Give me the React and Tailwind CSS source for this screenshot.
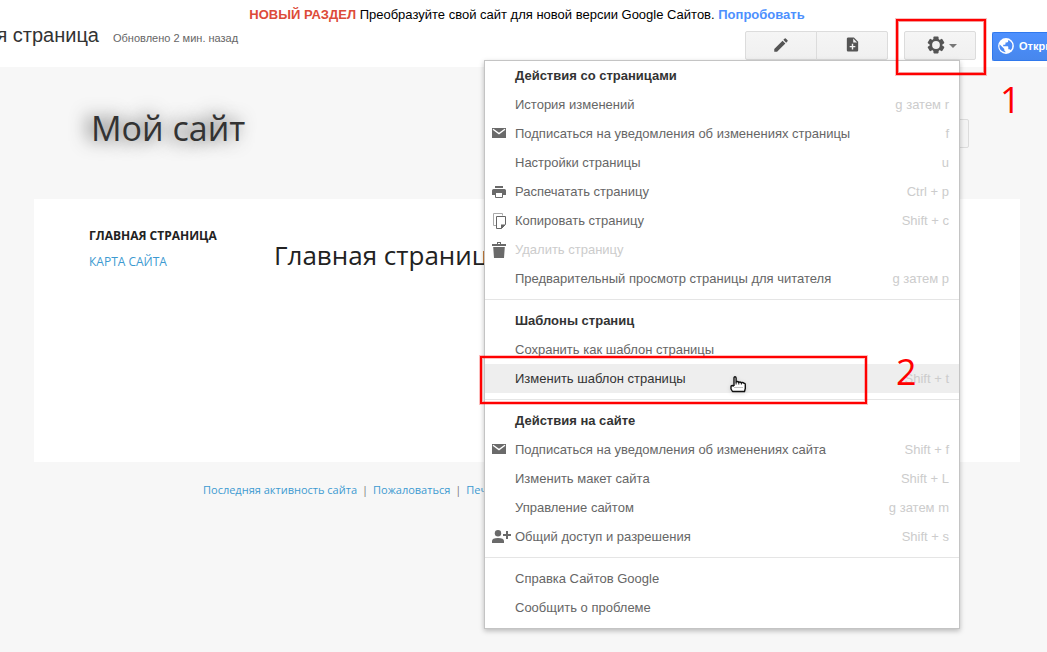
import React from "react";
import { MdEdit, MdNoteAdd } from "react-icons/md";

function GearIcon() {
  return (
    <svg viewBox="0 0 18 18" className="-mt-0.5 size-[18px]" aria-hidden="true">
      <g fill="#555">
        {[0, 60, 120].map((angle) => (
          <rect key={angle} x="6.4" y="0.6" width="5.2" height="16.8" rx="0.8" transform={`rotate(${angle} 9 9)`} />
        ))}
        <circle cx="9" cy="9" r="6.4" />
      </g>
      <circle cx="9" cy="9" r="3.9" fill="#f2f2f2" />
    </svg>
  );
}

function CaretIcon() {
  return (
    <svg viewBox="0 0 8 4" className="h-1 w-2" fill="#777" aria-hidden="true">
      <path d="M0 0H8L4 4Z" />
    </svg>
  );
}

function GlobeIcon() {
  return (
    <svg viewBox="0 0 16 16" className="-mt-0.5 size-4 shrink-0" aria-hidden="true">
      <circle cx="8" cy="8" r="7.9" fill="#fff" />
      <path
        d="M1.6 6.3L6.3 11V12Q6.3 13.1 7.4 13.4V14.4Q3.8 14 2.1 11.2Q.9 8.9 1.6 6.3ZM10 1.9Q13.8 3.2 14.4 7Q14.7 10.1 12.7 12.3Q12.3 11.2 11 11.2H10.3V9Q10.3 8.3 9.6 8.3H5.2V6.7H6.8Q7.5 6.7 7.5 6V4.5H9Q10.2 4.4 10.2 3Z"
        fill="#4b8bf6"
      />
    </svg>
  );
}

function MailIcon() {
  return (
    <svg viewBox="0 0 14 10" className="-mt-0.5 h-2.5 w-3.5" aria-hidden="true">
      <rect width="14" height="10" fill="#6a6a6a" />
      <path d="M1 1.2L7 5.6L13 1.2" fill="none" stroke="#fff" strokeWidth="1.3" />
    </svg>
  );
}

function PrintIcon() {
  return (
    <svg viewBox="0 0 14 12" className="h-3 w-3.5" aria-hidden="true">
      <path d="M3 0H11V2H3ZM1.5 3H12.5Q14 3 14 4.5V9H11V7H3V9H0V4.5Q0 3 1.5 3Z" fill="#6a6a6a" />
      <path d="M3.5 7V11.5H10.5V7" fill="#fff" stroke="#6a6a6a" />
    </svg>
  );
}

function CopyIcon() {
  return (
    <svg viewBox="0 0 14 17" className="h-[17px] w-3.5" fill="none" aria-hidden="true">
      <path d="M10.5 3.5V1.5H1.5V13.5H4" stroke="#aaa" />
      <path d="M4.5 4.5H13.5V12.5L9.5 16.5H4.5Z" fill="#fff" stroke="#666" />
      <path d="M9 12.5H13.5L9 17Z" fill="#666" />
    </svg>
  );
}

function TrashIcon() {
  return (
    <svg viewBox="0 0 14 16" className="h-4 w-3.5" fill="#6a6a6a" aria-hidden="true">
      <path d="M0 2H5V0H9V2H14V4H0ZM1.2 5H12.8L12 16H2Z" />
      <rect x="6" y="1" width="2" height="1" fill="#fff" />
    </svg>
  );
}

function ShareIcon() {
  return (
    <svg viewBox="0 0 19 13" className="-mr-[5px] h-[13px] w-[19px] shrink-0" fill="#6a6a6a" aria-hidden="true">
      <circle cx="6" cy="3.2" r="3.2" />
      <path d="M0 13V11Q0 8 6 8T12 11V13ZM11 4H14V1H16V4H19V6H16V9H14V6H11Z" />
    </svg>
  );
}

function HandPointer() {
  return (
    <svg viewBox="0 0 17 17" className="absolute left-[730px] top-[376px] size-[17px] drop-shadow-sm" aria-hidden="true">
      <path
        d="M4 10V2Q4 .8 5 .8T6.1 2V6Q7.7 5 8.7 6.3Q10.3 5.5 11.3 6.7Q13 6 13.8 7.2Q15.3 7 15.3 8.7V12.5L14.5 15.5H2.5L1 13V10.5Q1 9.5 2.2 9.5L4 10"
        fill="#fff"
        stroke="#111"
        strokeWidth="1.4"
        strokeLinejoin="round"
      />
      <path d="M6.1 6V8.5M8.8 6V8.5M11.4 6.6V8.5" stroke="#111" />
      <path d="M4.5 11.5H13" stroke="#888" strokeDasharray="1 1" />
    </svg>
  );
}

const sections = [
  {
    title: "Действия со страницами",
    items: [
      { label: "История изменений", keys: "g затем r" },
      { label: "Подписаться на уведомления об изменениях страницы", keys: "f", icon: <MailIcon /> },
      { label: "Настройки страницы", keys: "u" },
      { label: "Распечатать страницу", keys: "Ctrl + p", icon: <PrintIcon /> },
      { label: "Копировать страницу", keys: "Shift + c", icon: <CopyIcon /> },
      { label: "Удалить страницу", icon: <TrashIcon />, disabled: true },
      { label: "Предварительный просмотр страницы для читателя", keys: "g затем p" },
    ],
  },
  {
    title: "Шаблоны страниц",
    items: [
      { label: "Сохранить как шаблон страницы" },
      { label: "Изменить шаблон страницы", keys: "Shift + t", active: true },
    ],
  },
  {
    title: "Действия на сайте",
    items: [
      { label: "Подписаться на уведомления об изменениях сайта", keys: "Shift + f", icon: <MailIcon /> },
      { label: "Изменить макет сайта", keys: "Shift + L" },
      { label: "Управление сайтом", keys: "g затем m" },
      { label: "Общий доступ и разрешения", keys: "Shift + s", icon: <ShareIcon /> },
    ],
  },
  {
    items: [{ label: "Справка Сайтов Google" }, { label: "Сообщить о проблеме" }],
  },
];

function MenuItem({ item }) {
  const color = item.disabled ? "text-[#ccc]" : item.active ? "bg-[#eee] text-[#333]" : "text-[#666]";
  return (
    <button type="button" role="menuitem" disabled={item.disabled} className={`flex h-[29px] w-full items-center pr-2.5 text-left ${color}`}>
      <span className="flex w-[30px] shrink-0 pl-[7px]">{item.icon}</span>
      <span>{item.label}</span>
      <span className="ml-auto text-[#ccc]">{item.keys}</span>
    </button>
  );
}

function SettingsMenu() {
  return (
    <div role="menu" className="w-[476px] border border-[#c4c4c4] bg-white pb-1.5 text-[13px] shadow-[0_2px_5px_rgba(0,0,0,0.25)]">
      {sections.map((section, i) => (
        <div key={i} className={i > 0 ? "mt-1.5 border-t border-[#e5e5e5] pt-1.5" : ""}>
          {section.title && <h2 className="flex h-[29px] items-center pl-[30px] font-bold text-[#333]">{section.title}</h2>}
          {section.items.map((item) => (
            <MenuItem key={item.label} item={item} />
          ))}
        </div>
      ))}
    </div>
  );
}

const toolButton = "flex h-[29px] w-[72px] items-center justify-center border border-[#dcdcdc] bg-linear-to-b from-[#f5f5f5] to-[#f0f0f0] text-[#555]";

export default function App() {
  return (
    <div className="relative min-h-screen overflow-hidden bg-[#f7f7f7] font-['Liberation_Sans',Arial,sans-serif]">
      <header className="bg-white pb-[7px]">
        <p className="h-[31px] pl-[7px] text-center text-[13px] leading-[30px] text-black">
          <strong className="text-[#dd4b39]">НОВЫЙ РАЗДЕЛ</strong> Преобразуйте свой сайт для новой версии Google Сайтов.{" "}
          <a href="#try" className="font-bold text-[#4d90fe]">Попробовать</a>
        </p>
        <div className="flex h-[29px]">
          <div className="-mt-2.5 flex flex-1 items-baseline gap-3.5 whitespace-nowrap">
            <h1 className="flex w-[99px] justify-end text-xl text-[#333]">я страница</h1>
            <span className="text-[11px] text-[#666]">Обновлено 2 мин. назад</span>
          </div>
          <div className="flex">
            <button type="button" aria-label="Изменить страницу" className={`${toolButton} rounded-l-xs`}>
              <MdEdit className="-mt-0.5 size-[18px]" />
            </button>
            <button type="button" aria-label="Создать страницу" className={`${toolButton} -ml-px rounded-r-xs`}>
              <MdNoteAdd className="-mt-0.5 size-[17px]" />
            </button>
          </div>
          <div className="relative z-10 ml-4 pr-4">
            <button type="button" aria-label="Настройки" className={`${toolButton} gap-1 rounded-xs pl-1`}>
              <GearIcon />
              <CaretIcon />
            </button>
            <div className="absolute right-8 top-[29px]">
              <SettingsMenu />
            </div>
          </div>
          <button type="button" className="mt-px flex h-[29px] w-[55px] items-center gap-[5px] overflow-hidden whitespace-nowrap rounded-l-xs border border-r-0 border-[#3079ed] bg-linear-to-b from-[#4d90fe] to-[#4787ed] pl-[5px] text-[11px] font-bold text-white">
            <GlobeIcon />
            Открыть доступ
          </button>
        </div>
      </header>

      <div className="flex h-[132px] items-start justify-between pl-[91px] pr-[78px] pt-[35px]">
        <p className="font-['Open_Sans','Noto_Sans',sans-serif] text-[34px] leading-[52px] text-[#333] [text-shadow:-5px_0_18px_rgba(0,0,0,0.8)]">Мой сайт</p>
        <button type="button" aria-label="Поиск" className="mt-[17px] h-[29px] w-[60px] rounded-xs border border-[#dcdcdc] bg-[#f4f4f4]" />
      </div>

      <main className="ml-[34px] mr-[27px] flex min-h-[263px] bg-white font-['Open_Sans','Noto_Sans',sans-serif]">
        <nav className="flex w-60 flex-col gap-2 pl-[55px] pt-7 text-xs leading-[18px]">
          <a href="#home" className="font-bold text-[#222]">ГЛАВНАЯ СТРАНИЦА</a>
          <a href="#map" className="text-[#3d9ad1]">КАРТА САЙТА</a>
        </nav>
        <h2 className="pt-[39px] text-[26px] leading-[34px] text-[#222]">Главная страница</h2>
      </main>

      <footer className="flex gap-[5px] pl-[203px] pt-5 font-['Open_Sans','Noto_Sans',sans-serif] text-[11px] leading-4 text-[#777]">
        <a href="#activity" className="text-[#3d9ad1]">Последняя активность сайта</a>
        <span>|</span>
        <a href="#abuse" className="text-[#3d9ad1]">Пожаловаться</a>
        <span>|</span>
        <a href="#print" className="text-[#3d9ad1]">Печать</a>
      </footer>

      <div className="pointer-events-none absolute inset-0 z-20 overflow-hidden font-['Open_Sans','Noto_Sans',sans-serif] text-[36px] leading-none text-[#f00]">
        <div className="absolute left-[896px] top-[19px] h-14 w-[90px] border-2 border-[#f00] shadow-[0_0_0_1px_rgba(230,0,0,0.25),inset_0_0_0_1px_rgba(230,0,0,0.4)]" />
        <span className="absolute left-[1000px] top-[82px]">1</span>
        <div className="absolute left-[480px] top-[356px] h-12 w-[387px] border-2 border-[#f00] shadow-[0_0_0_1px_rgba(255,0,0,0.25),inset_0_0_0_1px_rgba(255,0,0,0.25)]" />
        <span className="absolute left-[896px] top-[354px]">2</span>
        <HandPointer />
      </div>
    </div>
  );
}
